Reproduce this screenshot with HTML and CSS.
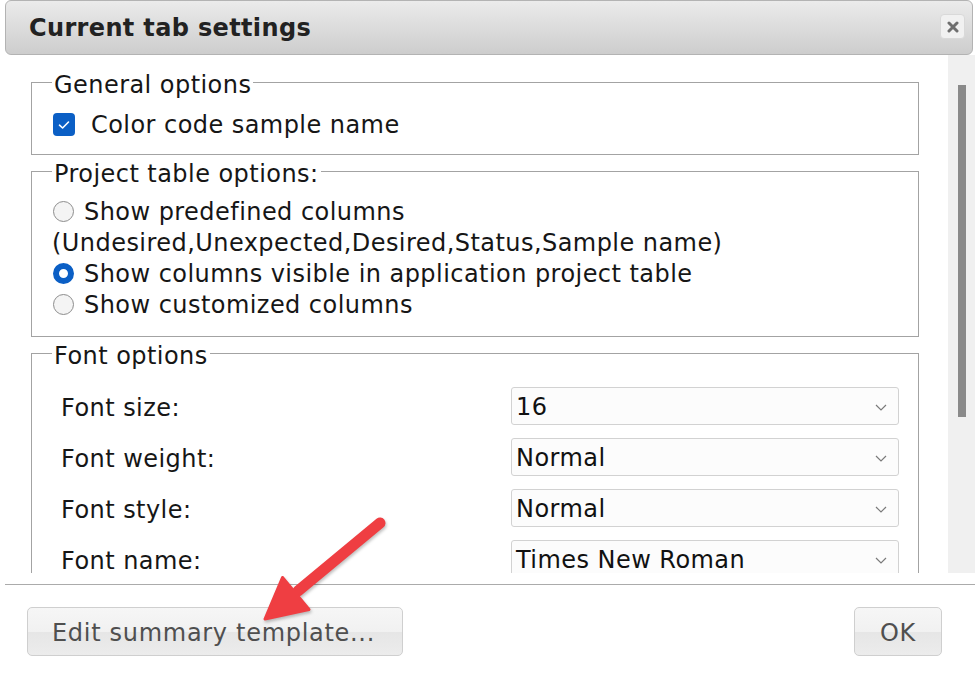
FILE: index.html
```html
<!DOCTYPE html>
<html lang="en">
<head>
<meta charset="utf-8">
<title>Current tab settings</title>
<link rel="stylesheet" href="styles.css">
</head>
<body>
<div class="dialog">
  <div class="titlebar">
    <span class="title">Current tab settings</span>
    <span class="close" aria-label="close">
      <svg width="12" height="12" viewBox="0 0 12 12"><path d="M2 2 L10 10 M10 2 L2 10" stroke="#6f6f6f" stroke-width="3" stroke-linecap="round"/></svg>
    </span>
  </div>

  <div class="body-area">
    <div class="content">
      <fieldset class="group general">
        <legend>General options</legend>
        <div class="option">
          <span class="checkbox"><svg width="12" height="10" viewBox="0 0 12 10"><path d="M1.5 5.2 L4.6 8 L10.5 2" fill="none" stroke="#fff" stroke-width="1.6" stroke-linecap="round" stroke-linejoin="round"/></svg></span>
          <span class="label check-label">Color code sample name</span>
        </div>
      </fieldset>

      <fieldset class="group project">
        <legend>Project table options:</legend>
        <div class="option"><span class="radio"></span><span class="label">Show predefined columns</span></div>
        <div class="option plain">(Undesired,Unexpected,Desired,Status,Sample name)</div>
        <div class="option"><span class="radio checked"></span><span class="label">Show columns visible in application project table</span></div>
        <div class="option"><span class="radio"></span><span class="label">Show customized columns</span></div>
      </fieldset>

      <fieldset class="group fonts">
        <legend>Font options</legend>
        <div class="font-grid">
          <span class="font-label">Font size:</span>
          <div class="select"><span>16</span><svg class="chev" width="12" height="7" viewBox="0 0 12 7"><path d="M1 1 L6 6 L11 1" fill="none" stroke="#7a7a7a" stroke-width="1.2"/></svg></div>
          <span class="font-label">Font weight:</span>
          <div class="select"><span>Normal</span><svg class="chev" width="12" height="7" viewBox="0 0 12 7"><path d="M1 1 L6 6 L11 1" fill="none" stroke="#7a7a7a" stroke-width="1.2"/></svg></div>
          <span class="font-label">Font style:</span>
          <div class="select"><span>Normal</span><svg class="chev" width="12" height="7" viewBox="0 0 12 7"><path d="M1 1 L6 6 L11 1" fill="none" stroke="#7a7a7a" stroke-width="1.2"/></svg></div>
          <span class="font-label">Font name:</span>
          <div class="select"><span>Times New Roman</span><svg class="chev" width="12" height="7" viewBox="0 0 12 7"><path d="M1 1 L6 6 L11 1" fill="none" stroke="#7a7a7a" stroke-width="1.2"/></svg></div>
        </div>
      </fieldset>
    </div>
    <div class="scrollbar"><div class="thumb"></div></div>
  </div>

  <div class="footer">
    <button class="btn">Edit summary template...</button>
    <button class="btn ok">OK</button>
  </div>

  <svg class="arrow" width="975" height="682" viewBox="0 0 975 682">
    <g fill="#ef3e42" stroke="#ef3e42">
      <line x1="380" y1="523" x2="298" y2="591" stroke-width="11" stroke-linecap="round"/>
      <polygon points="265,619 282.5,577.5 309,609.5" stroke-width="3" stroke-linejoin="round"/>
    </g>
  </svg>
</div>
</body>
</html>
```
FILE: styles.css
```css
* { box-sizing: border-box; }

body {
  margin: 0;
  background: #ffffff;
  font-family: "DejaVu Sans", Verdana, sans-serif;
  font-size: 24px;
  color: #161616;
  letter-spacing: 0.45px;
}

.dialog {
  position: relative;
  width: 975px;
  height: 682px;
  overflow: hidden;
  display: flex;
  flex-direction: column;
  background: #ffffff;
}

.titlebar {
  flex: none;
  height: 55px;
  margin: 0 2px 0 5px;
  border: 1px solid #b3b3b3;
  border-radius: 6px;
  background: linear-gradient(#ebebeb, #cdcdcd);
  display: flex;
  align-items: center;
  justify-content: space-between;
  padding: 0 7px 0 23px;
}

.title {
  font-weight: bold;
  font-size: 24px;
  color: #222;
  letter-spacing: 0.35px;
}

.close {
  width: 25px;
  height: 25px;
  margin-top: -2px;
  border: 1px solid #d9d9d9;
  border-radius: 4px;
  background: #f1f1f1;
  display: flex;
  align-items: center;
  justify-content: center;
}

.body-area {
  flex: none;
  height: 518px;
  display: flex;
}

.content {
  flex: 1;
  overflow: hidden;
  padding: 11px 29px 0 31px;
}

.scrollbar {
  flex: none;
  width: 27px;
  background: #f0f0f0;
  padding-top: 30px;
}

.thumb {
  width: 8px;
  height: 332px;
  margin-left: 10px;
  background: #8a8a8a;
}

.group {
  margin: 0;
  border: 1px solid #a3a3a3;
  padding: 0 19px 0 20px;
  min-width: 0;
}

.group legend {
  padding: 5px 2px 0;
  line-height: 28px;
}

.general { padding-top: 10px; padding-bottom: 14px; }
.project { padding-top: 8px; padding-bottom: 16px; }
.fonts { padding-top: 17px; padding-bottom: 20px; }

.option {
  display: flex;
  align-items: center;
  height: 31px;
  white-space: nowrap;
}

.checkbox {
  flex: none;
  width: 22px;
  height: 23px;
  margin-left: 1px;
  border-radius: 4px;
  background: #0b5fc5;
  display: flex;
  align-items: center;
  justify-content: center;
}

.check-label { margin-left: 16px; }

.radio {
  flex: none;
  width: 21px;
  height: 21px;
  margin-left: 1px;
  border-radius: 50%;
  border: 1.5px solid #8d8d8d;
  background: #f4f4f4;
}

.radio.checked {
  border: 6px solid #0b5fc5;
  background: #ffffff;
}

.radio + .label { margin-left: 10px; }

.font-grid {
  display: grid;
  grid-template-columns: 459px 388px;
  row-gap: 13px;
  align-items: center;
}

.font-label { padding: 3px 0 0 9px; }

.select {
  height: 38px;
  border: 1px solid #d2d2d2;
  border-radius: 3px;
  background: #fcfcfc;
  display: flex;
  align-items: center;
  justify-content: space-between;
  padding: 2px 11px 0 4px;
  color: #111;
}

.chev { flex: none; margin-top: 0; }

.footer {
  flex: none;
  margin: 11px 0 0 5px;
  border-top: 1px solid #ababab;
  padding: 22px 33px 0 22px;
  display: flex;
  justify-content: space-between;
}

.btn {
  height: 49px;
  font-family: "DejaVu Sans", Verdana, sans-serif;
  font-size: 24px;
  letter-spacing: 0.7px;
  color: #4f4f4f;
  border: 1px solid #cfcfcf;
  border-radius: 5px;
  background: linear-gradient(#f6f6f6 0%, #f1f1f1 50%, #e6e6e6 52%, #ececec 100%);
  padding: 4px 27px 0 24px;
  line-height: 43px;
}

.btn.ok { width: 88px; padding: 4px 0 0; }

.arrow {
  position: absolute;
  left: 0;
  top: 0;
  pointer-events: none;
  filter: drop-shadow(1px 2px 1.5px rgba(0,0,0,0.25));
}
```
